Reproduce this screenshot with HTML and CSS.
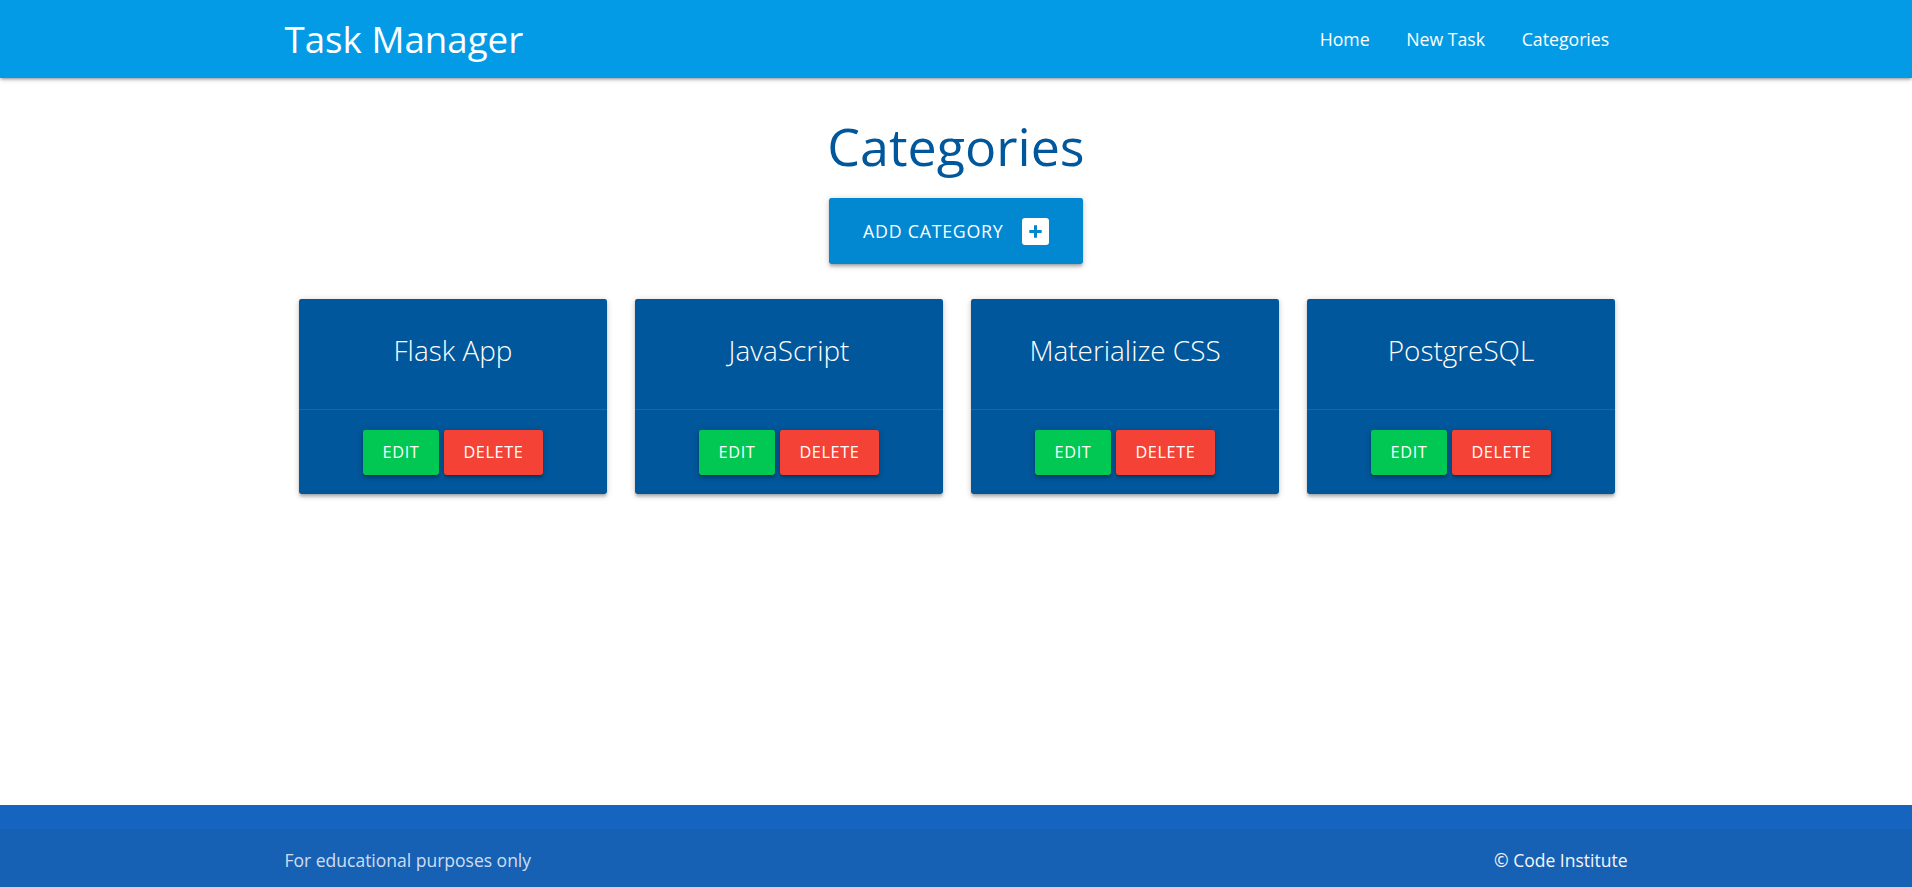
FILE: index.html
```html
<!DOCTYPE html>
<html lang="en">
<head>
<meta charset="utf-8">
<title>Task Manager</title>
<link rel="stylesheet" href="styles.css">
</head>
<body>
<header class="navbar">
  <div class="container nav-wrapper">
    <a href="#" class="brand-logo">Task Manager</a>
    <ul class="nav-links">
      <li><a href="#">Home</a></li>
      <li><a href="#">New Task</a></li>
      <li><a href="#">Categories</a></li>
    </ul>
  </div>
</header>

<main class="main">
  <h3 class="page-title">Categories</h3>
  <div class="center-row">
    <a href="#" class="btn-large">ADD CATEGORY
      <svg class="btn-icon" width="27" height="27" viewBox="0 0 27 27" aria-hidden="true">
        <rect x="0" y="0" width="27" height="27" rx="3" fill="#ffffff"/>
        <path d="M7.3 13.5H19.7M13.5 7.3V19.7" stroke="#0288d1" stroke-width="3" fill="none"/>
      </svg>
    </a>
  </div>
  <div class="cards">
    <div class="card">
      <div class="card-content"><span class="card-title">Flask App</span></div>
      <div class="card-action"><a href="#" class="btn btn-edit">EDIT</a><a href="#" class="btn btn-delete">DELETE</a></div>
    </div>
    <div class="card">
      <div class="card-content"><span class="card-title">JavaScript</span></div>
      <div class="card-action"><a href="#" class="btn btn-edit">EDIT</a><a href="#" class="btn btn-delete">DELETE</a></div>
    </div>
    <div class="card">
      <div class="card-content"><span class="card-title">Materialize CSS</span></div>
      <div class="card-action"><a href="#" class="btn btn-edit">EDIT</a><a href="#" class="btn btn-delete">DELETE</a></div>
    </div>
    <div class="card">
      <div class="card-content"><span class="card-title">PostgreSQL</span></div>
      <div class="card-action"><a href="#" class="btn btn-edit">EDIT</a><a href="#" class="btn btn-delete">DELETE</a></div>
    </div>
  </div>
</main>

<footer class="page-footer">
  <div class="footer-copyright">
    <div class="container footer-inner">
      <span class="footer-left">For educational purposes only</span>
      <a href="#" class="footer-right">© Code Institute</a>
    </div>
  </div>
</footer>
</body>
</html>
```

FILE: styles.css
```css
* { box-sizing: border-box; }

html, body {
  margin: 0;
  padding: 0;
}

body {
  font-family: "Open Sans", "Noto Sans", sans-serif;
  font-size: 17.5px;
  color: rgba(0, 0, 0, 0.87);
  background: #ffffff;
  min-height: 100vh;
  display: flex;
  flex-direction: column;
}

a { text-decoration: none; }

.container {
  width: 1343px;
  margin: 0 auto;
}

/* Navbar */
.navbar {
  height: 78px;
  background: #039be5;
  box-shadow: 0 2.4px 2.4px 0 rgba(0,0,0,.14), 0 3.7px 1.2px -2.4px rgba(0,0,0,.12), 0 1.2px 6px 0 rgba(0,0,0,.2);
  position: relative;
  z-index: 2;
}

.nav-wrapper {
  height: 78px;
  display: flex;
  align-items: center;
  justify-content: space-between;
}

.brand-logo {
  color: #ffffff;
  font-size: 36.7px;
  line-height: 78px;
  font-weight: 400;
}

.nav-links {
  list-style: none;
  margin: 0;
  padding: 0;
  display: flex;
}

.nav-links a {
  display: block;
  padding: 0 18.3px;
  color: #ffffff;
  font-size: 17.7px;
  line-height: 78px;
}

/* Main */
.main {
  flex: 1 0 auto;
  display: flex;
  flex-direction: column;
  align-items: center;
}

.page-title {
  margin: 39px 0 0;
  font-size: 52px;
  line-height: 1.1;
  font-weight: 400;
  color: #01579b;
  text-align: center;
}

.center-row {
  margin-top: 24px;
  display: flex;
  justify-content: center;
}

.btn-large {
  display: inline-flex;
  align-items: center;
  height: 66px;
  padding: 0 34.5px;
  background: #0288d1;
  color: #ffffff;
  font-size: 17.8px;
  letter-spacing: 0.75px;
  border-radius: 2.4px;
  box-shadow: 0 2.4px 2.4px 0 rgba(0,0,0,.14), 0 3.7px 1.2px -2.4px rgba(0,0,0,.12), 0 1.2px 6px 0 rgba(0,0,0,.2);
}

.btn-icon {
  margin-left: 18.5px;
  display: block;
}

/* Cards */
.cards {
  margin-top: 35px;
  margin-left: 2px;
  display: grid;
  grid-template-columns: repeat(4, 308px);
  gap: 28px;
}

.card {
  background: #01579b;
  border-radius: 2.4px;
  box-shadow: 0 2.4px 2.4px 0 rgba(0,0,0,.14), 0 3.7px 1.2px -2.4px rgba(0,0,0,.12), 0 1.2px 6px 0 rgba(0,0,0,.2);
  color: #ffffff;
}

.card-content {
  padding: 31.5px 29.3px 29.3px;
  text-align: center;
}

.card-title {
  display: block;
  font-size: 27.9px;
  font-weight: 300;
  line-height: 39px;
  margin-bottom: 10px;
}

.card-action {
  border-top: 1px solid rgba(160,160,160,.2);
  padding: 19.7px 29.3px;
  display: flex;
  justify-content: center;
  gap: 5px;
}

.btn {
  display: inline-block;
  height: 45px;
  line-height: 45px;
  padding: 0 19.5px;
  color: #ffffff;
  font-size: 16.3px;
  letter-spacing: 0.6px;
  border-radius: 2.4px;
  box-shadow: 0 2.4px 2.4px 0 rgba(0,0,0,.14), 0 3.7px 1.2px -2.4px rgba(0,0,0,.12), 0 1.2px 6px 0 rgba(0,0,0,.2);
}

.btn-edit { background: #00c853; }
.btn-delete { background: #f44336; }

/* Footer */
.page-footer {
  background: #1565c0;
  padding-top: 24.4px;
}

.footer-copyright {
  height: 58px;
  padding-top: 4px;
  background: rgba(51,51,51,.08);
  display: flex;
  align-items: center;
}

.footer-inner {
  display: flex;
  justify-content: space-between;
  align-items: center;
}

.footer-left {
  color: rgba(255,255,255,.8);
  font-size: 17.5px;
}

.footer-right {
  color: #f5f5f5;
  font-size: 17.5px;
}
```
